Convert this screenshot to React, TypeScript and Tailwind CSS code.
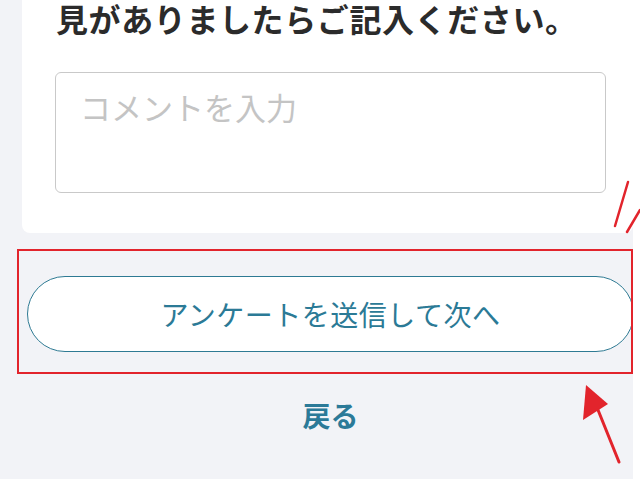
import React from "react";

export default function App() {
  return (
    <div
      className="relative w-[640px] h-[479px] overflow-hidden bg-[#f2f3f7] flex"
      style={{ fontFamily: '"Noto Sans CJK JP", "Noto Sans", sans-serif' }}
    >
      <div className="w-[633px] flex flex-col">
        <div className="ml-[22px] h-[233px] bg-white rounded-b-[8px] pl-[34px] pr-[27px] flex flex-col">
          <div className="text-[32px] leading-[36px] font-bold text-[#2b2b2b] whitespace-nowrap tracking-[0.6px]">
            見がありましたらご記入ください。
          </div>
          <div className="mt-[36px] -ml-[1px] h-[121px] w-[551px] border border-[#c9c9c9] rounded-[6px] px-[24px] pt-[14px]">
            <div className="text-[31px] leading-[40px] text-[#c4c4c4]">
              コメントを入力
            </div>
          </div>
        </div>
        <div className="mt-[43px] ml-[27px] w-[607px] h-[76px] shrink-0 rounded-full border-[1.5px] border-[#2e7a93] bg-white flex items-center justify-center">
          <span className="text-[28px] leading-none text-[#2b7a96] tracking-[0.5px]">
            アンケートを送信して次へ
          </span>
        </div>
        <div className="mt-[47px] ml-[27px] w-[607px] flex justify-center">
          <span className="text-[28px] leading-[32px] font-bold text-[#2b7a98]">
            戻る
          </span>
        </div>
      </div>
      <div className="w-[7px] bg-white" />

      {/* red annotation box */}
      <div className="absolute left-[17px] top-[249px] w-[616px] h-[125px] border-2 border-[#e2242c]" />

      {/* red annotation marks */}
      <svg className="absolute left-0 top-0" width="640" height="479" viewBox="0 0 640 479">
        <line x1="628" y1="182" x2="615" y2="226" stroke="#e2242c" strokeWidth="2.5" strokeLinecap="round" />
        <line x1="640" y1="210" x2="627" y2="232" stroke="#e2242c" strokeWidth="2.5" strokeLinecap="round" />
        <line x1="619" y1="462" x2="594" y2="400" stroke="#e2242c" strokeWidth="3" strokeLinecap="round" />
        <polygon points="586,385 583,420 608,404" fill="#e2242c" />
      </svg>
    </div>
  );
}
